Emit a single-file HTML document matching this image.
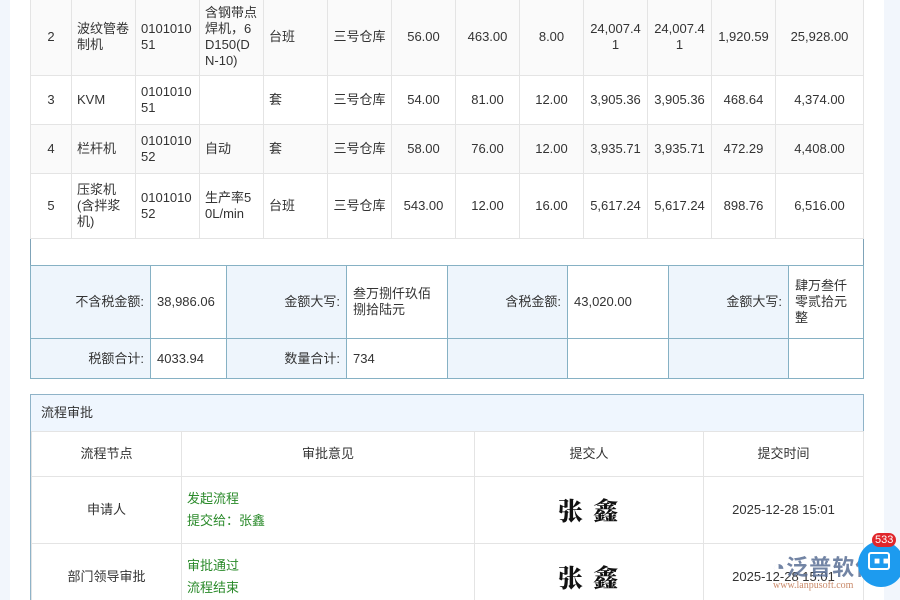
<!DOCTYPE html>
<html><head><meta charset="utf-8"><style>
*{margin:0;padding:0;box-sizing:border-box}
html,body{width:900px;height:600px;overflow:hidden}
body{background:#f2f6fc;font-family:"Liberation Sans","Noto Sans CJK SC",sans-serif;font-size:13px;color:#333;position:relative}
.card{position:absolute;left:10px;top:0;width:874px;height:600px;background:#fff}
.a{position:absolute}
table{border-collapse:collapse;position:absolute;table-layout:fixed}
.m td{border:1px solid #e4e4e4;padding:0 5px;line-height:16px;text-align:center;word-break:break-all}
.m td.l{text-align:left}
.s td{border:1px solid #86b1c4;padding:0 6px;line-height:16px}
.s td.k{background:#eef5fc;text-align:right}
.f td{border:1px solid #e4e4e4;text-align:center;line-height:22px}
.g{color:#2a8a2a;text-align:left!important;padding-left:5px}
.sig{font-family:"Noto Serif CJK SC","WenQuanYi Zen Hei",serif;font-weight:900;font-size:25px;letter-spacing:2px;color:#111}
</style></head><body>
<div class="card"></div>
<div class="a" style="left:30px;top:0;width:834px;height:266px;border-left:1px solid #7fa3b8;border-right:1px solid #7fa3b8"></div>
<table class="m" style="left:30px;top:-2px;width:833px">
<colgroup><col style="width:41px"><col style="width:64px"><col style="width:64px"><col style="width:64px"><col style="width:64px"><col style="width:64px"><col style="width:64px"><col style="width:64px"><col style="width:64px"><col style="width:64px"><col style="width:64px"><col style="width:64px"><col style="width:88px"></colgroup>
<tr style="height:77px;background:#fafafa"><td>2</td><td class="l">波纹管卷制机</td><td class="l">0101010<br>51</td><td class="l">含钢带点焊机，6<br>D150(D<br>N-10)</td><td class="l">台班</td><td>三号仓库</td><td>56.00</td><td>463.00</td><td>8.00</td><td>24,007.4<br>1</td><td>24,007.4<br>1</td><td>1,920.59</td><td>25,928.00</td></tr>
<tr style="height:49px"><td>3</td><td class="l">KVM</td><td class="l">0101010<br>51</td><td></td><td class="l">套</td><td>三号仓库</td><td>54.00</td><td>81.00</td><td>12.00</td><td>3,905.36</td><td>3,905.36</td><td>468.64</td><td>4,374.00</td></tr>
<tr style="height:49px;background:#fafafa"><td>4</td><td class="l">栏杆机</td><td class="l">0101010<br>52</td><td class="l">自动</td><td class="l">套</td><td>三号仓库</td><td>58.00</td><td>76.00</td><td>12.00</td><td>3,935.71</td><td>3,935.71</td><td>472.29</td><td>4,408.00</td></tr>
<tr style="height:65px"><td>5</td><td class="l">压浆机(含拌浆机)</td><td class="l">0101010<br>52</td><td class="l">生产率5<br>0L/min</td><td class="l">台班</td><td>三号仓库</td><td>543.00</td><td>12.00</td><td>16.00</td><td>5,617.24</td><td>5,617.24</td><td>898.76</td><td>6,516.00</td></tr>
</table>
<table class="s" style="left:30px;top:265px;width:833px">
<colgroup><col style="width:120px"><col style="width:76px"><col style="width:120px"><col style="width:101px"><col style="width:120px"><col style="width:101px"><col style="width:120px"><col style="width:75px"></colgroup>
<tr style="height:73px"><td class="k">不含税金额:</td><td>38,986.06</td><td class="k">金额大写:</td><td>叁万捌仟玖佰捌拾陆元</td><td class="k">含税金额:</td><td>43,020.00</td><td class="k">金额大写:</td><td>肆万叁仟零贰拾元整</td></tr>
<tr style="height:40px"><td class="k">税额合计:</td><td>4033.94</td><td class="k">数量合计:</td><td>734</td><td class="k"></td><td></td><td class="k"></td><td></td></tr>
</table>
<div class="a" style="left:30px;top:394px;width:834px;height:210px;border:1px solid #8fb3c8"></div>
<div class="a" style="left:31px;top:395px;width:832px;height:37px;background:#eff6fe;border-bottom:1px solid #e0e6ec;line-height:36px;padding-left:10px">流程审批</div>
<table class="f" style="left:31px;top:431px;width:832px">
<colgroup><col style="width:150px"><col style="width:293px"><col style="width:229px"><col style="width:160px"></colgroup>
<tr style="height:45px"><td>流程节点</td><td>审批意见</td><td>提交人</td><td>提交时间</td></tr>
<tr style="height:67px"><td>申请人</td><td class="g">发起流程<br>提交给：张鑫</td><td class="sig">张 鑫</td><td>2025-12-28 15:01</td></tr>
<tr style="height:67px"><td>部门领导审批</td><td class="g">审批通过<br>流程结束</td><td class="sig">张 鑫</td><td>2025-12-28 15:01</td></tr>
</table>
<div class="a" style="left:772px;top:550px;font-size:22px;color:#5a6f95;font-weight:bold;letter-spacing:1px;opacity:.85">◔泛普软件</div>
<div class="a" style="left:773px;top:580px;font-size:10px;color:#c98a6a;font-family:'Liberation Serif',serif">www.lanpusoft.com</div>
<div class="a" style="left:858px;top:541px;width:46px;height:46px;border-radius:50%;background:#1d9bef"></div>
<div class="a" style="left:868px;top:552px;width:22px;height:18px;border:2px solid #fff;border-radius:3px"></div>
<div class="a" style="left:874px;top:560px;color:#fff;font-size:10px;line-height:4px;font-weight:bold">■ ■</div>
<div class="a" style="left:872px;top:533px;background:#e0262b;color:#fff;font-size:11px;border-radius:8px;padding:0 3px;line-height:14px">533</div>
</body></html>
